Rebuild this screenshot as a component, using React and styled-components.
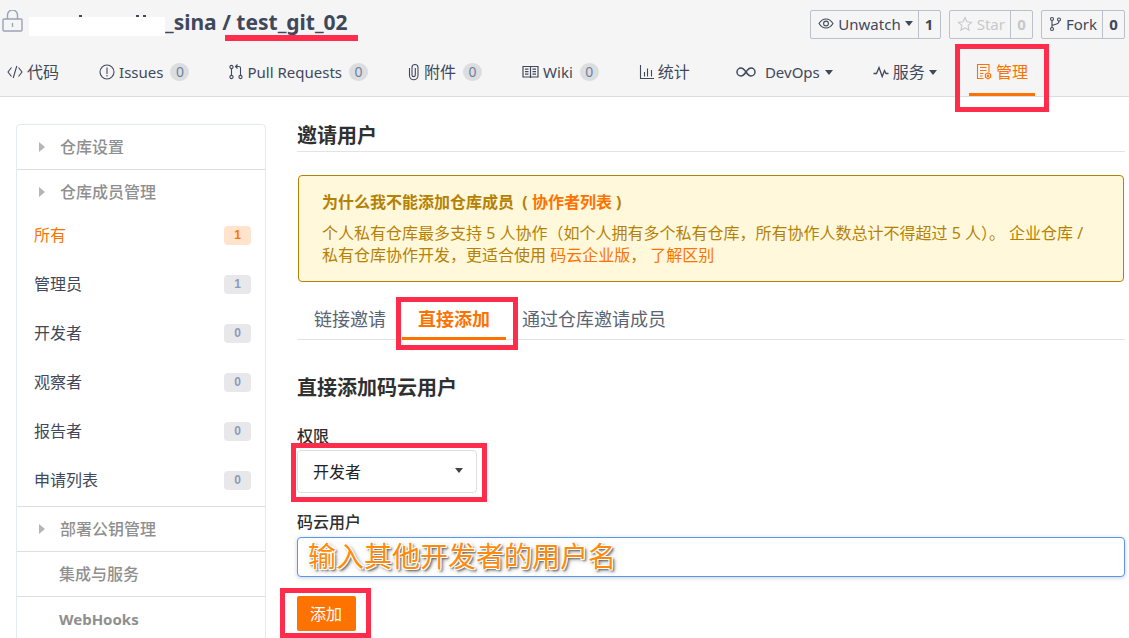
import React from "react";
import styled, { createGlobalStyle, css } from "styled-components";

const latin = '"Noto Sans", "Noto Sans CJK SC", sans-serif';
const orange = "#fe7300";
const red = "#ff2d4b";
const ink = "#40485b";

const GlobalStyle = createGlobalStyle`
  *, *::before, *::after { box-sizing: border-box; }
  html { scrollbar-width: none; }
  body {
    margin: 0;
    background: #fff;
    color: ${ink};
    font: 16px/22px ${latin};
  }
  a { color: inherit; text-decoration: none; }
  button, input, select { font: inherit; color: inherit; }
`;

/* Red annotation frame laid over its parent */
const Marked = styled.div`
  position: relative;
  &::after {
    content: "";
    position: absolute;
    inset: ${(p) => p.$inset};
    border: 5px solid ${red};
    pointer-events: none;
  }
`;

const Header = styled.header`
  height: 97px;
  background: #f5f5f5;
  border-bottom: 1px solid #dcdddf;
  display: flex;
  flex-direction: column;
`;

const TitleBar = styled.div`
  display: flex;
  align-items: center;
  height: 48px;
  padding: 0 4px 4px 2px;
`;

const RepoTitle = styled.h1`
  margin: 0;
  flex: 1;
  display: flex;
  align-items: center;
  font-size: 21px;
  line-height: 28px;
  font-weight: 700;
  white-space: pre;
`;

const Redaction = styled.span`
  position: relative;
  width: 136px;
  height: 19px;
  margin: 8px 0 0 6px;
  background: #fff;
`;

const Tick = styled.span`
  position: absolute;
  bottom: 100%;
  left: ${(p) => p.$left};
  width: 3px;
  height: 2px;
  background: ${ink};
`;

const RepoName = styled.a`
  position: relative;
  &::after {
    content: "";
    position: absolute;
    left: -11px;
    right: -10px;
    top: 27px;
    height: 6px;
    background: ${red};
  }
`;

const Actions = styled.div`
  display: flex;
  gap: 8px;
`;

const ActionGroup = styled.div`
  display: flex;
  height: 29px;
  margin-top: 5px;
  border: 1px solid #bcc0c9;
  border-radius: 2px;
  color: ${(p) => (p.$muted ? "#c6c8cb" : ink)};
`;

const ActionButton = styled.button`
  display: flex;
  align-items: center;
  gap: 4px;
  padding: 0 5px 2px 7px;
  border: 0;
  background: none;
  font-size: 15px;
`;

const ActionCount = styled.a`
  display: flex;
  align-items: center;
  justify-content: center;
  width: 22px;
  padding-bottom: 2px;
  border-left: 1px solid #bcc0c9;
  font-size: 15px;
  font-weight: 700;
`;

const Nav = styled.nav`
  flex: 1;
  display: flex;
  justify-content: space-between;
  padding: 0 94px 0 7px;
`;

const NavItem = styled.a`
  display: flex;
  align-items: center;
  height: 48px;
  gap: 4px;
  font-size: 15px;
  ${(p) =>
    p.$active &&
    css`
      color: ${orange};
      padding: 0 7px;
      border-bottom: 3px solid ${orange};
      padding-top: 3px;
    `}
`;

const WideNavItem = styled(NavItem)`
  gap: 5px;
  padding-left: 6px;
  svg { margin-right: 4px; }
`;

const ManageTab = styled(Marked)`
  margin-left: -8px;
`;

const Cjk = styled.span`
  font-size: 16px;
`;

const Count = styled.span`
  min-width: 19px;
  height: 18px;
  margin-left: 3px;
  border-radius: 9px;
  background: #dcdddf;
  color: #70809f;
  font-size: 14px;
  line-height: 18px;
  text-align: center;
`;

const Caret = styled.i`
  border: 4px solid transparent;
  border-top: 5px solid currentColor;
  border-bottom: 0;
`;

const Page = styled.main`
  display: flex;
  align-items: flex-start;
  padding: 27px 4px 0 16px;
  gap: 31px;
`;

const Sidebar = styled.aside`
  flex: 0 0 250px;
  border: 1px solid #e3e9ed;
  border-radius: 4px;
`;

const Section = styled.section`
  padding-bottom: ${(p) => (p.$open ? "2px" : "0")};
  & + & { border-top: 1px solid #dcdfe1; }
`;

const SectionLink = styled.a`
  display: flex;
  align-items: center;
  height: 44px;
  padding-left: ${(p) => (p.$plain ? "42px" : "22px")};
  color: #8f8f8f;
  font-weight: ${(p) => (p.$latin ? 700 : 500)};
  font-size: ${(p) => (p.$latin ? "15px" : "16px")};
`;

const Arrow = styled.i`
  margin-right: 15px;
  border: 5px solid transparent;
  border-left: 6px solid #b5b5b5;
  border-right: 0;
`;

const MemberList = styled.ul`
  display: flex;
  flex-direction: column;
  gap: 1px;
  margin: -3px 0 0;
  padding: 0;
  list-style: none;
`;

const MemberLink = styled.a`
  display: flex;
  align-items: center;
  justify-content: space-between;
  height: 48px;
  padding: 0 14px 0 17px;
  color: ${(p) => (p.$active ? orange : ink)};
`;

const MemberCount = styled.span`
  width: 27px;
  height: 19px;
  border-radius: 4px;
  background: ${(p) => (p.$active ? "#ffe3cc" : "#e8e8eb")};
  color: ${(p) => (p.$active ? orange : "#8c9bbb")};
  font: 700 12px/19px "Liberation Sans", sans-serif;
  text-align: center;
`;

const Content = styled.div`
  flex: 1;
  min-width: 0;
`;

const PageHeading = styled.h2`
  margin: 0 0 23px;
  padding: 1px 0 4px;
  border-bottom: 1px solid #e2e3e4;
  color: #303030;
  font-size: 20px;
  line-height: 22px;
`;

const Notice = styled.section`
  margin: 0 1px;
  padding: 15px 23px;
  border: 1px solid #b58105;
  border-radius: 4px;
  background: #fff8db;
  color: #b58105;
  a { color: ${orange}; }
`;

const NoticeTitle = styled.h3`
  margin: 0 0 9px;
  font-size: 16px;
  line-height: 22px;
`;

const NoticeText = styled.p`
  margin: 0;
  line-height: 22px;
`;

const Tabs = styled.nav`
  display: flex;
  height: 58px;
  padding-left: 1px;
  border-bottom: 1px solid #e2e3e4;
  font-size: 18px;
`;

const Tab = styled.a`
  display: flex;
  align-items: center;
  height: 58px;
  padding: 15px 16px 0;
  color: #5b6472;
  ${(p) =>
    p.$active &&
    css`
      color: ${orange};
      font-weight: 700;
      border-bottom: 3px solid ${orange};
      padding-top: 18px;
    `}
`;

const FormHeading = styled.h3`
  margin: 36px 0 24px;
  color: #303030;
  font-size: 20px;
  line-height: 24px;
`;

const Label = styled.label`
  display: block;
  height: 24px;
  color: #303030;
  line-height: 24px;
  font-weight: 500;
`;

const SelectBox = styled(Marked)`
  width: 180px;
  margin: 2px 0 17px;
`;

const Select = styled.select`
  appearance: none;
  width: 100%;
  height: 43px;
  padding: 0 15px;
  border: 1px solid #dededf;
  border-radius: 4px;
  background: #fff;
  color: #222;
`;

const SelectCaret = styled(Caret)`
  position: absolute;
  right: 14px;
  top: 18px;
  color: #444;
`;

const UserInput = styled.input`
  display: block;
  width: 100%;
  height: 40px;
  margin: 3px 0 19px;
  padding: 0 10px 2px;
  border: 1px solid #5a96ee;
  border-radius: 4px;
  outline: 0;
  box-shadow: 0 1px 4px #c9ced6;
  font-size: 28px;
  line-height: 36px;
  &::placeholder {
    color: #ff8a0c;
    opacity: 1;
    text-shadow: 1px 1px #fff, -1px 1px #fff, 1px -1px #fff, -1px -1px #fff,
      2px 2px 2px #666, 2px 2px 4px #777;
  }
`;

const SubmitBox = styled(Marked)`
  width: fit-content;
`;

const Submit = styled.button`
  display: block;
  height: 35px;
  padding: 0 14px 0 13px;
  border: 0;
  border-radius: 2px;
  background: ${orange};
  color: #fff;
`;

const Svg = styled.svg`
  display: block;
  flex: none;
  fill: none;
  stroke: currentColor;
  stroke-width: ${(p) => p.$w || 1.1};
`;

const Icon = ({ w = 16, h = 16, weight, children }) => (
  <Svg width={w} height={h} viewBox={`0 0 ${w} ${h}`} $w={weight} aria-hidden="true">
    {children}
  </Svg>
);

const LockIcon = () => (
  <Svg width="21" height="24" viewBox="0 0 21 24" $w={1.4} color="#9aa3b8" aria-hidden="true">
    <rect x="1" y="9" width="19" height="12" rx="1" />
    <path d="M5.500 9V5a5 5 0 0 1 10 0V9M10.500 13v4" />
  </Svg>
);
const CodeIcon = () => (
  <Icon><path d="M4.5 3.5 1 8l3.5 4.5M11.5 3.5 15 8l-3.500 4.500M9.800 2 6.200 14" /></Icon>
);
const IssueIcon = () => (
  <Icon><circle cx="8" cy="8" r="7" /><path d="M8 3.500v6.500M8 11v1.500" /></Icon>
);
const PullIcon = () => (
  <Icon w={14}>
    <circle cx="2.500" cy="3" r="1.600" /><circle cx="2.500" cy="13" r="1.600" /><circle cx="11.500" cy="13" r="1.600" />
    <path d="M2.500 4.600v6.800M11.500 11.400V4q0-1.500-1.500-1.500H6.500M8.500.5l-2 2 2 2" />
  </Icon>
);
const ClipIcon = () => (
  <Icon w={12} h={18}>
    <path d="M1.500 5v7.500a4 4 0 0 0 8.500 0V4.500a3 3 0 0 0-6 0v7.500a1.600 1.600 0 0 0 3.300 0V5" />
  </Icon>
);
const WikiIcon = () => (
  <Icon w={17} h={14} weight={1.2}>
    <path d="M1 1.500h15v10.500H1zM8.500 1.500v11.500M3 4.200h3.500M3 6.700h3.500M3 9.200h3.500M10.500 4.200H14M10.500 6.700H14M10.500 9.200H14" />
  </Icon>
);
const ChartIcon = () => (
  <Icon w={15}><path d="M1.500 1v13.500H15M5.500 12.500V8M8.500 12.500V4.500M12.500 12.500V6" /></Icon>
);
const InfinityIcon = () => (
  <Icon w={20} h={10} weight={1.500}>
    <path d="M10 5C8.300 2.500 6.800 1 5 1a4 4 0 0 0 0 8c1.800 0 3.300-1.500 5-4s3.200-4 5-4a4 4 0 0 1 0 8c-1.800 0-3.300-1.500-5-4z" />
  </Icon>
);
const PulseIcon = () => (
  <Icon weight={1.300}><path d="M.5 9.500h3L6 3.500l3.200 9 2.300-6 1.500 3h2.500" /></Icon>
);
const ManageIcon = () => (
  <Icon h={18}>
    <path d="M7.500 15.500H1.500V1.500h11.500V9M4 4.500h6.500M4 7.500h6.500M4 10.500h3.500M4 13h2.500" />
    <path d="M12 9.800l2.600 1.500v3L12 15.800l-2.600-1.500v-3z" /><circle cx="12" cy="12.800" r=".8" />
  </Icon>
);
const EyeIcon = () => (
  <Icon h={14}>
    <path d="M1 6.500C3 3.300 5.300 2 8 2s5 1.300 7 4.500C13 9.700 10.700 11 8 11S3 9.700 1 6.500z" /><circle cx="8" cy="6.500" r="2.400" />
  </Icon>
);
const StarIcon = () => (
  <Icon><path d="M8 1.500l1.900 4.300 4.600.5-3.400 3.200.9 4.600L8 11.800l-4 2.300.9-4.600L1.500 6.300l4.600-.5z" /></Icon>
);
const ForkIcon = () => (
  <Icon w={13}>
    <circle cx="3" cy="3" r="1.500" /><circle cx="3" cy="13" r="1.500" /><circle cx="10" cy="3.500" r="1.500" />
    <path d="M3 4.500v7M10 5q0 2.500-2.500 3L3 9.500" />
  </Icon>
);

const members = [
  ["所有", 1, true],
  ["管理员", 1],
  ["开发者", 0],
  ["观察者", 0],
  ["报告者", 0],
  ["申请列表", 0],
];

export default function App() {
  return (
    <>
      <GlobalStyle />
      <Header>
        <TitleBar>
          <LockIcon />
          <RepoTitle>
            <Redaction>
              <Tick $left="50px" />
              <Tick $left="107px" />
              <Tick $left="114px" />
            </Redaction>
            <a href="#owner">_sina</a>
            <span> / </span>
            <RepoName href="#repo">test_git_02</RepoName>
          </RepoTitle>
          <Actions>
            <ActionGroup>
              <ActionButton><EyeIcon />Unwatch<Caret /></ActionButton>
              <ActionCount href="#watchers">1</ActionCount>
            </ActionGroup>
            <ActionGroup $muted>
              <ActionButton><StarIcon />Star</ActionButton>
              <ActionCount href="#stars">0</ActionCount>
            </ActionGroup>
            <ActionGroup>
              <ActionButton><ForkIcon />Fork</ActionButton>
              <ActionCount href="#forks">0</ActionCount>
            </ActionGroup>
          </Actions>
        </TitleBar>
        <Nav>
          <NavItem href="#code"><CodeIcon /><Cjk>代码</Cjk></NavItem>
          <NavItem href="#issues"><IssueIcon />Issues<Count>0</Count></NavItem>
          <NavItem href="#pulls"><PullIcon />Pull Requests<Count>0</Count></NavItem>
          <NavItem href="#attach"><ClipIcon /><Cjk>附件</Cjk><Count>0</Count></NavItem>
          <NavItem href="#wiki"><WikiIcon />Wiki<Count>0</Count></NavItem>
          <NavItem href="#stats"><ChartIcon /><Cjk>统计</Cjk></NavItem>
          <WideNavItem href="#devops"><InfinityIcon />DevOps<Caret /></WideNavItem>
          <NavItem href="#services"><PulseIcon /><Cjk>服务</Cjk><Caret /></NavItem>
          <ManageTab $inset="-4px -14px -16px -14px">
            <NavItem href="#manage" $active><ManageIcon /><Cjk>管理</Cjk></NavItem>
          </ManageTab>
        </Nav>
      </Header>
      <Page>
        <Sidebar>
          <Section><SectionLink href="#settings"><Arrow />仓库设置</SectionLink></Section>
          <Section $open>
            <SectionLink href="#members"><Arrow />仓库成员管理</SectionLink>
            <MemberList>
              {members.map(([name, count, active]) => (
                <li key={name}>
                  <MemberLink href={`#${name}`} $active={active}>
                    {name}
                    <MemberCount $active={active}>{count}</MemberCount>
                  </MemberLink>
                </li>
              ))}
            </MemberList>
          </Section>
          <Section><SectionLink href="#keys"><Arrow />部署公钥管理</SectionLink></Section>
          <Section><SectionLink href="#integrations" $plain>集成与服务</SectionLink></Section>
          <Section><SectionLink href="#webhooks" $plain $latin>WebHooks</SectionLink></Section>
        </Sidebar>
        <Content>
          <PageHeading>邀请用户</PageHeading>
          <Notice>
            <NoticeTitle>
              为什么我不能添加仓库成员 &nbsp;( <a href="#collaborators">协作者列表</a> )
            </NoticeTitle>
            <NoticeText>
              个人私有仓库最多支持 5 人协作（如个人拥有多个私有仓库，所有协作人数总计不得超过 5 人）。 企业仓库 / 私有仓库协作开发，更适合使用 <a href="#enterprise">码云企业版</a>， <a href="#compare">了解区别</a>
            </NoticeText>
          </Notice>
          <Tabs>
            <Tab href="#link">链接邀请</Tab>
            <Marked $inset="15px -12px -11px -6px">
              <Tab href="#direct" $active>直接添加</Tab>
            </Marked>
            <Tab href="#repo-invite">通过仓库邀请成员</Tab>
          </Tabs>
          <FormHeading>直接添加码云用户</FormHeading>
          <Label htmlFor="role">权限</Label>
          <SelectBox $inset="-7px -10px -9px -6px">
            <Select id="role" defaultValue="dev">
              <option value="dev">开发者</option>
            </Select>
            <SelectCaret />
          </SelectBox>
          <Label htmlFor="user">码云用户</Label>
          <UserInput id="user" placeholder="输入其他开发者的用户名" />
          <SubmitBox $inset="-8px -15px -7px -17px">
            <Submit type="submit">添加</Submit>
          </SubmitBox>
        </Content>
      </Page>
    </>
  );
}
